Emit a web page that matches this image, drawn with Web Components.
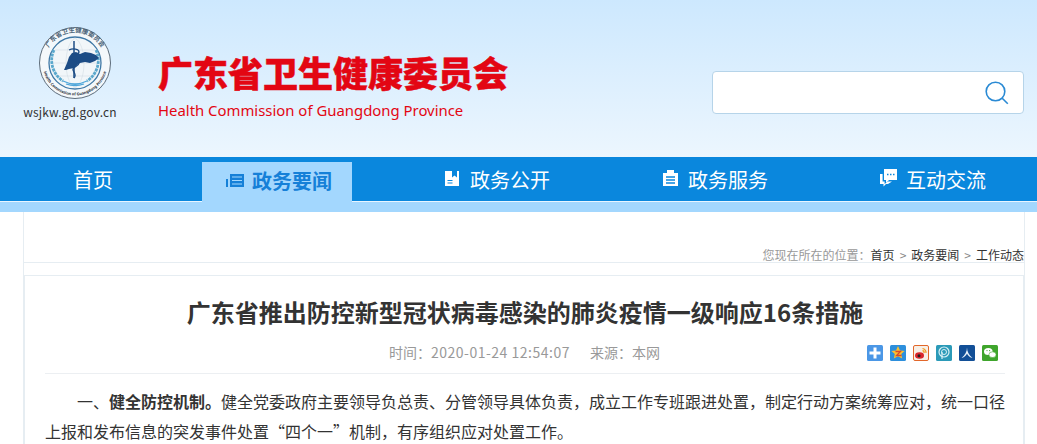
<!DOCTYPE html>
<html lang="zh">
<head>
<meta charset="utf-8">
<title>广东省卫生健康委员会</title>
<style>
  html, body { margin: 0; background: #fff; }
  body { font-family: "Noto Sans CJK SC", "Noto Sans", sans-serif; overflow: hidden; height: 444px; }
</style>
</head>
<body>
<gd-header></gd-header>
<gd-nav>
  <nav-item>首页</nav-item>
  <nav-item icon="list" active>政务要闻</nav-item>
  <nav-item icon="book">政务公开</nav-item>
  <nav-item icon="clip">政务服务</nav-item>
  <nav-item icon="chat">互动交流</nav-item>
</gd-nav>
<gd-crumbs></gd-crumbs>
<gd-article>
  <span slot="title">广东省推出防控新型冠状病毒感染的肺炎疫情一级响应16条措施</span>
  <p>一、<strong>健全防控机制。</strong>健全党委政府主要领导负总责、分管领导具体负责，成立工作专班跟进处置，制定行动方案统筹应对，统一口径上报和发布信息的突发事件处置“四个一”机制，有序组织应对处置工作。</p>
</gd-article>

<script>
// site header: logo, red title, search box
customElements.define("gd-header", class extends HTMLElement {
  constructor() {
    super();
    this.attachShadow({ mode: "open" }).innerHTML = `
      <style>
        :host { display: flex; height: 157px; box-sizing: border-box; background: linear-gradient(#cde8fe, #ecf6fe); }
        .logo { width: 158px; flex: none; display: flex; flex-direction: column; align-items: center; padding: 26px 8px 0 0; box-sizing: border-box; }
        .logo svg { display: block; width: 74px; height: 74px; }
        .url { font-size: 12px; line-height: 16px; color: #333; margin: 4px 10px 0 0; letter-spacing: .15px; white-space: nowrap; }
        .name { flex: none; width: 554px; padding-top: 47px; box-sizing: border-box; color: #e30613; }
        .cn { font-size: 35px; line-height: 50px; font-weight: 900; -webkit-text-stroke: .5px #e30613; }
        .en { font-size: 14.9px; line-height: 22px; margin-top: 2px; font-family: "Noto Sans", sans-serif; white-space: nowrap; }
        .search { width: 312px; height: 43px; box-sizing: border-box; margin-top: 71px; background: #fff; border: 1px solid #b6d4e9; border-radius: 4px; display: flex; justify-content: flex-end; align-items: center; padding-right: 13px; }
        .search svg { width: 26px; height: 26px; }
      </style>
      <div class="logo">
        <svg viewBox="0 0 74 74">
          <defs>
            <path id="top" d="M6.500 37a30.500 30.500 0 0 1 61 0"/>
            <path id="bot" d="M4.500 37a32.500 32.500 0 0 0 65 0"/>
          </defs>
          <circle cx="37" cy="37" r="35.500" fill="#f4f8fb" stroke="#5d6c7a" stroke-width="1"/>
          <circle cx="37" cy="37" r="26" fill="#f1f6f9" stroke="#3f78a6" stroke-width="1.300"/>
          <text font-size="6.400" font-weight="700" fill="#4a6277" text-anchor="middle"><textPath href="#top" startOffset="50%">广东省卫生健康委员会</textPath></text>
          <text font-size="3.900" font-weight="700" fill="#1f2d3a" text-anchor="middle" font-family="Noto Sans"><textPath href="#bot" startOffset="50%">Health Commission of Guangdong Province</textPath></text>
          <path d="M14 37h46M37 12c-12 7-12 43 0 50M37 12c12 7 12 43 0 50M17 24h40M17 50h40" fill="none" stroke="#d3dde4" stroke-width=".6"/>
          <path d="M16 24c-5 10-2 24 9 31M58 24c5 10 2 24-9 31" fill="none" stroke="#5ba8cc" stroke-width="2.800" stroke-dasharray="3 .8"/>
          <path d="M25 55c8 4 16 4 24 0M28 58c6 2 12 2 18 0" fill="none" stroke="#4fa6da" stroke-width="1.300"/>
          <path d="M26 44l3-7 2-6 3-4 4-1 4 2 5-2 6 1 5 2 3 3-4 3-5 2-5-1-5 1-3 2-3 3-5 1-3 1z" fill="#1c4c85"/>
          <path d="M36 15v37" stroke="#1c4c85" stroke-width="1.500" fill="none"/>
          <path d="M31 24c4-2 10-1 10 2s-8 3-8 6 8 2 8 5-7 4-6 7 4 5 1 8" stroke="#1c4c85" stroke-width="1.300" fill="none"/>
        </svg>
        <div class="url">wsjkw.gd.gov.cn</div>
      </div>
      <div class="name">
        <div class="cn">广东省卫生健康委员会</div>
        <div class="en">Health Commission of Guangdong Province</div>
      </div>
      <div class="search">
        <svg viewBox="0 0 26 26" fill="none" stroke="#2a8ad4" stroke-width="1.600"><circle cx="11.500" cy="11.500" r="9.300"/><path d="M18.200 18.200l5.600 5.600"/></svg>
      </div>`;
  }
});

const navIcons = {
  list: '<path d="M0 9h2v8H0zM4 4h14v13H4z" fill="currentColor"/><path d="M6 7h10M6 10.500h10M6 14h10" stroke="#a3d7fe" stroke-width="1.200"/>',
  book: '<path d="M1 2h14v15H1z" fill="currentColor"/><path d="M8 2h5v6.500l-2.500-2L8 8.500z" fill="#0a87dd"/><path d="M3.500 11.500h5M3.500 14h5" stroke="#0a87dd" stroke-width="1.200"/>',
  clip: '<path d="M1 4h15v13H1zM5 1h7v3H5z" fill="currentColor"/><path d="M4 8h9M4 11h9M4 14h9" stroke="#0a87dd" stroke-width="1.300"/>',
  chat: '<path d="M4 0h13v11H9l-3 3v-3H4z" fill="currentColor"/><path d="M0 5h2.600v7.500h2v2.600L8 12.500h4L8 15H6l-2.500 2.500V15H0z" fill="currentColor"/><path d="M7 5.500h1.500M10 5.500h1.500M13 5.500h1.500" stroke="#0a87dd" stroke-width="1.500"/>'
};

// one entry of the blue bar
customElements.define("nav-item", class extends HTMLElement {
  constructor() {
    super();
    const icon = navIcons[this.getAttribute("icon")];
    this.attachShadow({ mode: "open" }).innerHTML = `
      <style>
        :host { display: flex; align-items: center; gap: 6px; height: 44px; color: #fff; font-size: 20px; white-space: nowrap; }
        :host([active]) { height: 50px; width: 150px; box-sizing: border-box; padding: 0 0 14px 24px; margin-top: 5px; background: #a3d7fe; color: #1580d8; font-weight: 700; }
        svg { width: 20px; height: 20px; flex: none; }
      </style>
      ${icon ? `<svg viewBox="0 0 20 20">${icon}</svg>` : ""}
      <slot></slot>`;
  }
});

customElements.define("gd-nav", class extends HTMLElement {
  constructor() {
    super();
    this.attachShadow({ mode: "open" }).innerHTML = `
      <style>
        :host { display: block; background: #a3d7fe; height: 55px; }
        .bar { display: flex; height: 44px; padding-left: 73px; background: #0a87dd; border-bottom: 1px solid #e8f5ff; }
        ::slotted(:nth-child(1)) { margin-right: 89px; }
        ::slotted(:nth-child(2)) { margin-right: 92px; }
        ::slotted(:nth-child(3)) { margin-right: 112px; }
        ::slotted(:nth-child(4)) { margin-right: 112px; }
      </style>
      <div class="bar"><slot></slot></div>`;
  }
});

// white band with the "you are here" line
customElements.define("gd-crumbs", class extends HTMLElement {
  constructor() {
    super();
    this.attachShadow({ mode: "open" }).innerHTML = `
      <style>
        :host { display: block; height: 63px; margin-left: 23px; width: 1002px; box-sizing: border-box; border: 1px solid #e6edf2; border-width: 0 1px; }
        .line { height: 51px; box-sizing: border-box; border-bottom: 1px solid #e6edf2; display: flex; justify-content: flex-end; align-items: flex-end; font-size: 12px; line-height: 14px; color: #999; white-space: nowrap; }
        em { font-style: normal; color: #333; }
        i { font-style: normal; margin: 0 5px; color: #888; }
      </style>
      <div class="line"><span>您现在所在的位置：<em>首页</em><i>&gt;</i><em>政务要闻</em><i>&gt;</i><em>工作动态</em></span></div>`;
  }
});

// article card: title, meta row with share icons, body
customElements.define("gd-article", class extends HTMLElement {
  constructor() {
    super();
    this.attachShadow({ mode: "open" }).innerHTML = `
      <style>
        :host { display: block; margin-left: 23px; width: 1002px; box-sizing: border-box; border: 2px solid #e6edf2; border-width: 1px 2px 0; padding: 18px 18px 0 20px; }
        h1 { margin: 0; font-size: 24px; line-height: 36px; font-weight: 700; color: #333; text-align: center; }
        .meta { display: flex; height: 44px; box-sizing: border-box; border-bottom: 1px solid #eceff2; font-size: 14px; color: #999; }
        .info { width: 822px; padding: 12px 0 0 344px; box-sizing: border-box; line-height: 20px; white-space: nowrap; }
        .info b { font-weight: 400; letter-spacing: .5px; }
        .info span { margin-left: 20px; }
        .share { display: flex; gap: 7px; padding-top: 15px; }
        .share svg { width: 16px; height: 16px; display: block; }
        .body { padding-top: 12px; font-size: 16px; line-height: 30px; color: #333; text-indent: 2em; width: 961px; }
        ::slotted(p) { margin: 0; }
      </style>
      <h1><slot name="title"></slot></h1>
      <div class="meta">
        <div class="info">时间：<b>2020-01-24 12:54:07</b><span>来源：本网</span></div>
        <div class="share">
          <svg viewBox="0 0 16 16"><rect width="16" height="16" rx="1.500" fill="#4b97e6"/><path d="M8 2.500v11M2.500 8h11" stroke="#fff" stroke-width="3"/></svg>
          <svg viewBox="0 0 16 16"><rect width="16" height="16" rx="1.500" fill="#2d8fdc"/><path d="M8 1l2 4.400 4.600.5-3.400 3.100 1 4.600L8 11.200 3.800 13.600l1-4.600L1.400 5.900 6 5.400z" fill="#fbc02d"/><path d="M5.500 6.500h5l-4 4h5" stroke="#d9482b" stroke-width="1.300" fill="none"/></svg>
          <svg viewBox="0 0 16 16"><rect x=".5" y=".5" width="15" height="15" rx="1.500" fill="#f7efe6" stroke="#e2672a"/><ellipse cx="6.500" cy="10.500" rx="4.500" ry="3.300" fill="#d9262c"/><circle cx="6" cy="10.700" r="1.500" fill="#222"/><path d="M9.500 3.500a4 4 0 0 1 3.500 4.500M9.500 5.700a2 2 0 0 1 1.600 2.300" stroke="#f29a1f" stroke-width="1.200" fill="none"/></svg>
          <svg viewBox="0 0 16 16"><rect width="16" height="16" rx="1.500" fill="#2b9ab8"/><circle cx="8" cy="7" r="5" fill="none" stroke="#d8f0f6" stroke-width="1.200"/><circle cx="8" cy="7" r="2.500" fill="none" stroke="#d8f0f6"/><path d="M6 7v7" stroke="#d8f0f6" stroke-width="1.200"/></svg>
          <svg viewBox="0 0 16 16"><rect width="16" height="16" rx="1.500" fill="#124f97"/><path d="M8 2.500c0 4-2 7.500-5.500 10.500 2.500-.5 4.200-2 5.500-4.200 1.300 2.200 3 3.700 5.500 4.200C10 10 8 6.500 8 2.500z" fill="#e8f2fb"/></svg>
          <svg viewBox="0 0 16 16"><rect width="16" height="16" rx="1.500" fill="#3fa52c"/><ellipse cx="6.300" cy="6.500" rx="4.300" ry="3.500" fill="#fff"/><ellipse cx="10.500" cy="9.700" rx="3.600" ry="2.900" fill="#fff" stroke="#3fa52c" stroke-width=".6"/><circle cx="5" cy="5.600" r=".6" fill="#3fa52c"/><circle cx="7.600" cy="5.600" r=".6" fill="#3fa52c"/></svg>
        </div>
      </div>
      <div class="body"><slot></slot></div>`;
  }
});
</script>
</body>
</html>
